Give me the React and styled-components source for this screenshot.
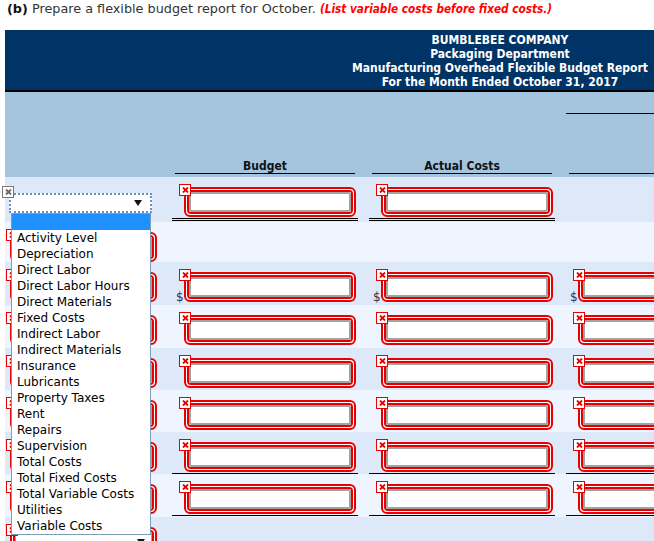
import React from "react";
import styled, { createGlobalStyle } from "styled-components";

const GlobalStyle = createGlobalStyle`
  * { box-sizing: border-box; }
  body {
    margin: 0;
    background: #fff;
    font-family: "DejaVu Sans", Verdana, sans-serif;
    overflow: hidden;
  }
`;

const RED = "#e60000";

const options = [
  "Activity Level",
  "Depreciation",
  "Direct Labor",
  "Direct Labor Hours",
  "Direct Materials",
  "Fixed Costs",
  "Indirect Labor",
  "Indirect Materials",
  "Insurance",
  "Lubricants",
  "Property Taxes",
  "Rent",
  "Repairs",
  "Supervision",
  "Total Costs",
  "Total Fixed Costs",
  "Total Variable Costs",
  "Utilities",
  "Variable Costs",
];

const rows = [
  { tone: "dark", h: 45, focus: true, cells: [{ line: "double" }, { line: "double" }, null] },
  { tone: "light", h: 40, cells: [null, null, null] },
  { tone: "dark", h: 43, cells: [{ dollar: true }, { dollar: true }, { dollar: true }] },
  { tone: "light", h: 43, cells: [{}, {}, {}] },
  { tone: "dark", h: 42, cells: [{}, {}, {}] },
  { tone: "light", h: 42, cells: [{}, {}, {}] },
  { tone: "dark", h: 42, cells: [{ line: "single" }, { line: "single" }, { line: "single" }] },
  { tone: "light", h: 43, cells: [{ line: "single" }, { line: "single" }, { line: "single" }] },
  { tone: "dark", h: 40, cells: [null, null, null] },
];

const Cross = ({ color }) => (
  <svg width="7" height="6" viewBox="0 0 7 6">
    <path d="M1 0.5 L6 5.5 M6 0.5 L1 5.5" stroke={color} strokeWidth="1.8" />
  </svg>
);

const Arrow = () => (
  <svg width="8" height="6" viewBox="0 0 8 6">
    <polygon points="0,0 8,0 4,6" fill="#111" />
  </svg>
);

const App = () => (
  <Page>
    <GlobalStyle />
    <Prompt>
      <b>(b)</b> Prepare a flexible budget report for October.{" "}
      <em>(List variable costs before fixed costs.)</em>
    </Prompt>
    <Report>
      <TitleBar>
        <div>BUMBLEBEE COMPANY</div>
        <div>Packaging Department</div>
        <div>Manufacturing Overhead Flexible Budget Report</div>
        <div>For the Month Ended October 31, 2017</div>
      </TitleBar>
      <HeadRow>
        <HeadLabel />
        <HeadCell>
          <ColTitle>Budget</ColTitle>
        </HeadCell>
        <HeadCell>
          <ColTitle>Actual Costs</ColTitle>
        </HeadCell>
        <HeadCell>
          <TopRule />
          <ColTitle>&nbsp;</ColTitle>
        </HeadCell>
      </HeadRow>
      {rows.map((row, i) => (
        <Row key={i} $tone={row.tone} $h={row.h}>
          <LabelCell>
            {row.focus ? (
              <>
                <Mark $gray $left={-3} $top={9}>
                  <Cross color="#666" />
                </Mark>
                <FocusSelect>
                  <Arrow />
                  <Dropdown>
                    <Option $active>&nbsp;</Option>
                    {options.map((o) => (
                      <Option key={o}>{o}</Option>
                    ))}
                  </Dropdown>
                </FocusSelect>
              </>
            ) : (
              <>
                <Mark $left={1} $top={7}>
                  <Cross color={RED} />
                </Mark>
                <Frame $w={147} $ml={5}>
                  <FrameInner>
                    <SelectBox>
                      <Arrow />
                    </SelectBox>
                  </FrameInner>
                </Frame>
              </>
            )}
          </LabelCell>
          {row.cells.map((c, j) => (
            <DataCell key={j}>
              {c && (
                <>
                  {c.dollar && <Dollar>$</Dollar>}
                  <Mark $left={7} $top={7}>
                    <Cross color={RED} />
                  </Mark>
                  <Rule $line={c.line}>
                    <Frame $w={172} $ml={12}>
                      <FrameInner>
                        <Field />
                      </FrameInner>
                    </Frame>
                  </Rule>
                </>
              )}
            </DataCell>
          ))}
        </Row>
      ))}
    </Report>
  </Page>
);

const Page = styled.div`
  width: 654px;
  height: 541px;
  overflow: hidden;
  padding-left: 5px;
`;

const Prompt = styled.p`
  margin: 0;
  height: 30px;
  padding: 1px 0 0 2px;
  font-size: 12.8px;
  line-height: 15px;
  color: #333;
  white-space: nowrap;
  b {
    color: #111;
  }
  em {
    color: #f00;
    font-weight: bold;
    font-size: 11.7px;
    font-family: "DejaVu Sans Condensed", sans-serif;
  }
`;

const Report = styled.div`
  width: 990px;
`;

const TitleBar = styled.div`
  height: 62px;
  padding-top: 3px;
  background: #003366;
  border-bottom: 2px solid #000;
  color: #fff;
  text-align: center;
  font-family: "DejaVu Sans Condensed", sans-serif;
  font-weight: bold;
  font-size: 12px;
  line-height: 14px;
`;

const HeadRow = styled.div`
  display: flex;
  height: 85px;
  background: #a5c5df;
`;

const HeadLabel = styled.div`
  width: 167px;
`;

const HeadCell = styled.div`
  width: 197px;
  display: flex;
  flex-direction: column;
  padding-bottom: 3px;
`;

const TopRule = styled.div`
  margin-top: 21px;
  border-top: 1px solid #000;
`;

const ColTitle = styled.div`
  margin: auto 0 0 3px;
  width: 180px;
  border-bottom: 1px solid #000;
  text-align: center;
  font-family: "DejaVu Sans Condensed", sans-serif;
  font-weight: bold;
  font-size: 12px;
  line-height: 14px;
  color: #111;
`;

const Row = styled.div`
  display: flex;
  height: ${(p) => p.$h}px;
  background: ${(p) => (p.$tone === "dark" ? "#dde8f8" : "#eef5fe")};
`;

const LabelCell = styled.div`
  position: relative;
  width: 167px;
  padding-top: 10px;
`;

const DataCell = styled.div`
  position: relative;
  width: 197px;
  padding-top: 10px;
`;

const Mark = styled.span`
  position: absolute;
  z-index: 2;
  left: ${(p) => p.$left}px;
  top: ${(p) => p.$top}px;
  width: 12px;
  height: 12px;
  display: flex;
  align-items: center;
  justify-content: center;
  background: #fff;
  border: 1px solid ${(p) => (p.$gray ? "#777" : RED)};
`;

const Frame = styled.div`
  width: ${(p) => p.$w}px;
  margin-left: ${(p) => p.$ml}px;
  height: 30px;
  padding: 1px;
  background: #fff;
  border: 2px solid ${RED};
  border-radius: 6px;
`;

const FrameInner = styled.div`
  height: 100%;
  border: 2px solid ${RED};
  border-radius: 4px;
  overflow: hidden;
`;

const Field = styled.input`
  display: block;
  width: 100%;
  height: 100%;
  margin: 0;
  border: 2px solid #a3a3a3;
  background: #fff;
`;

const SelectBox = styled.div`
  height: 100%;
  display: flex;
  align-items: center;
  justify-content: flex-end;
  padding-right: 6px;
  background: #fff;
  border: 1px solid #a3a3a3;
`;

const Rule = styled.div`
  width: 186px;
  padding-bottom: 1px;
  border-bottom: ${(p) =>
    p.$line === "double" ? "3px double #000" : p.$line === "single" ? "1px solid #000" : "none"};
`;

const Dollar = styled.span`
  position: absolute;
  left: 4px;
  top: 28px;
  font-size: 12px;
  line-height: 14px;
  color: #334;
`;

const FocusSelect = styled.div`
  position: relative;
  margin: 6px 0 0 4px;
  width: 143px;
  height: 20px;
  display: flex;
  align-items: center;
  justify-content: flex-end;
  padding-right: 8px;
  background: #fff;
  border: 2px dotted #6d8cc4;
`;

const Dropdown = styled.ul`
  position: absolute;
  z-index: 10;
  top: 18px;
  left: 0;
  width: 140px;
  margin: 0;
  padding: 0;
  list-style: none;
  background: #fff;
  border: 1px solid #7f9db9;
`;

const Option = styled.li`
  height: 16px;
  padding-left: 5px;
  font-size: 12px;
  line-height: 16px;
  color: #000;
  white-space: nowrap;
  background: ${(p) => (p.$active ? "#1e90ff" : "transparent")};
`;

export default App;
